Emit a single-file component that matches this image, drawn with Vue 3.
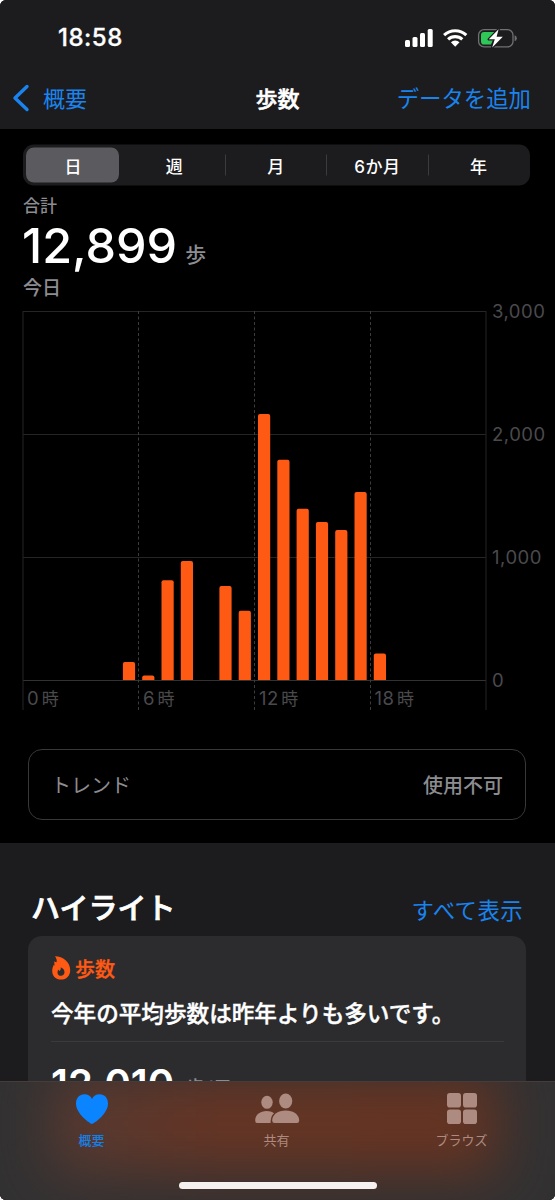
<template>
  <div class="screen">
    <header class="top">
      <div class="status">
        <span class="clock">18:58</span>
        <svg class="status-icons" width="114" height="24" viewBox="0 0 114 24">
          <g fill="#fff">
            <rect x="1" y="14" width="5" height="7" rx="1.5" />
            <rect x="8.5" y="11" width="5" height="10" rx="1.5" />
            <rect x="16" y="7" width="5" height="14" rx="1.5" />
            <rect x="23.7" y="3" width="5" height="18" rx="1.5" />
          </g>
          <g fill="none" stroke="#fff" stroke-width="3.1">
            <path d="M40.1 9.2 A16.2 16.2 0 0 1 62.3 9.2" />
            <path d="M44.1 13.4 A10.4 10.4 0 0 1 58.3 13.4" />
          </g>
          <path d="M46.9 16.3 A6.3 6.3 0 0 1 55.5 16.3 L51.2 20.8 Z" fill="#fff" />
          <rect x="74.6" y="3.6" width="34.4" height="17.3" rx="5.5" fill="none" stroke="#707073" stroke-width="1.3" />
          <path d="M110.6 9.2 q2.2 0.7 2.2 3 t-2.2 3 z" fill="#707073" />
          <path d="M80 6 H91 L86 14 H89 L87 18.6 H80 Q77 18.6 77 15.5 V9 Q77 6 80 6 Z" fill="#30c759" />
          <path d="M94.6 3.3 L84.8 13.3 H90.8 L88.2 21.4 L98.8 10.7 H92.6 Z" fill="#fff" stroke="#1c1c1e" stroke-width="2.6" paint-order="stroke" stroke-linejoin="round" />
        </svg>
      </div>
      <nav class="nav">
        <a class="back">
          <svg width="18" height="28" viewBox="0 0 18 28">
            <path d="M15 2.5 L3 14 L15 25.5" fill="none" stroke="#1a84ee" stroke-width="3.4" stroke-linecap="round" stroke-linejoin="round" />
          </svg>
          <span>概要</span>
        </a>
        <h1>歩数</h1>
        <a class="add">データを追加</a>
      </nav>
    </header>

    <main class="summary">
      <div class="segments">
        <button
          v-for="(item, index) in ranges"
          :key="item"
          class="segment"
          :class="{ 'is-active': index === active, 'has-line': index > active + 1 }"
          @click="active = index"
        >{{ item }}</button>
      </div>

      <div class="caption">合計</div>
      <div class="total"><span class="number">12,899</span><span class="unit">歩</span></div>
      <div class="today">今日</div>

      <svg class="chart" width="555" height="412" viewBox="0 0 555 412">
        <g class="grid">
          <line v-for="y in [11.5, 134.5, 257.5]" :key="y" x1="23" x2="486" :y1="y" :y2="y" />
          <line class="base" x1="23" x2="486" y1="380.5" y2="380.5" />
          <line x1="23" x2="23" y1="11" y2="410" />
          <line x1="486" x2="486" y1="11" y2="410" />
          <line v-for="x in [138.5, 254.5, 370.5]" :key="x" class="dash" :x1="x" :x2="x" y1="11" y2="411" />
        </g>
        <path v-for="bar in bars" :key="bar.hour" class="bar" :d="bar.path" />
        <g class="axis">
          <text v-for="(label, i) in ['3,000', '2,000', '1,000', '0']" :key="label" x="492" :y="18 + i * 123">{{ label }}</text>
          <text v-for="tick in ticks" :key="tick.hour" :x="tick.x" y="405">{{ tick.hour }}<tspan class="ji" dx="2.5">時</tspan></text>
        </g>
      </svg>

      <div class="trend">
        <span>トレンド</span>
        <span class="trend-value">使用不可</span>
      </div>
    </main>

    <section class="highlights">
      <div class="section-head">
        <h2>ハイライト</h2>
        <a>すべて表示</a>
      </div>
      <article class="card">
        <div class="card-title">
          <svg width="20" height="24" viewBox="0 0 20 24">
            <path d="M4 .2 C12 .2 19.2 6 19.2 14 C19.2 20 15.2 23.6 10.2 23.6 C4.9 23.6 1.2 20 1.2 15 C1.2 12.3 1.9 10.2 3 8.4 C3.2 9 3.5 9.4 4 9.7 C3.3 8 3.1 6.6 3.5 5.2 C4.1 5.9 4.8 6.2 5.6 6.3 C6.1 4.2 5.4 2 4 .2 Z" fill="#ff5a14" />
            <path d="M9.7 11.2 C12.2 12.2 13.6 14 13.5 16.3 C13.4 18.5 12 19.8 10 19.8 C7.9 19.8 6.5 18.5 6.5 16.4 C6.5 15.2 6.8 14.3 7.5 13.6 C7.7 14.3 8 14.7 8.6 14.9 C9.6 14 10 12.6 9.7 11.2 Z" fill="#2c2c2e" />
          </svg>
          <span>歩数</span>
        </div>
        <p>今年の平均歩数は昨年よりも多いです。</p>
        <div class="average"><span>12,010</span><small>歩/日</small></div>
      </article>
    </section>

    <footer class="tabbar">
      <div class="tabs">
        <a class="tab is-current">
          <svg width="36" height="32" viewBox="0 0 36 32">
            <path d="M18 31 C16 30.5 2 21 2 10.5 C2 5 5.5 1.2 10.3 1.2 C14 1.2 16.8 3.2 18 6 C19.2 3.2 22 1.2 25.7 1.2 C30.5 1.2 34 5 34 10.5 C34 21 20 30.5 18 31 Z" fill="#0a84ff" />
          </svg>
          <span>概要</span>
        </a>
        <a class="tab">
          <svg width="46" height="32" viewBox="0 0 46 32">
            <g fill="#ad8b80">
              <ellipse cx="13" cy="9.3" rx="5.7" ry="6.5" />
              <path d="M1.2 27.5 C1.2 21.5 6.5 18 12.5 18 C15.5 18 18 18.8 20.1 20.3 C17.8 22.2 16.8 24.5 16.6 30 H3 Q1.2 30 1.2 27.5 Z" />
              <ellipse cx="31.7" cy="8" rx="6.6" ry="7.4" />
              <path d="M18.2 27.5 C18.2 21.5 24 17.5 31.7 17.5 C39.4 17.5 45.2 21.5 45.2 27.5 Q45.2 30 43 30 H20.4 Q18.2 30 18.2 27.5 Z" />
            </g>
          </svg>
          <span>共有</span>
        </a>
        <a class="tab">
          <svg width="32" height="32" viewBox="0 0 32 32">
            <g fill="#ad8b80">
              <rect x="1" y="0" width="14" height="14.5" rx="2.8" />
              <rect x="17" y="0" width="14" height="14.5" rx="2.8" />
              <rect x="1" y="16.5" width="14" height="14.5" rx="2.8" />
              <rect x="17" y="16.5" width="14" height="14.5" rx="2.8" />
            </g>
          </svg>
          <span>ブラウズ</span>
        </a>
      </div>
      <div class="home-indicator"></div>
    </footer>
  </div>
</template>

<script setup>
import { computed, ref } from 'vue'

const ranges = ['日', '週', '月', '6か月', '年']
const active = ref(0)

const steps = {
  5: 146,
  6: 36,
  7: 810,
  8: 968,
  10: 764,
  11: 562,
  12: 2163,
  13: 1790,
  14: 1392,
  15: 1285,
  16: 1220,
  17: 1528,
  18: 215
}

const ticks = [
  { hour: 0, x: 27 },
  { hour: 6, x: 143 },
  { hour: 12, x: 259 },
  { hour: 18, x: 374.5 }
]

// 1歩 = 0.123px、1時間 = 19.3px
const bars = computed(() =>
  Object.entries(steps).map(([hour, value]) => {
    const x = 23 + hour * 19.3 + 3.4
    const top = 380 - value * 0.123
    return {
      hour,
      path: `M${x} 380 V${top + 2} q0 -2 2 -2 h8.2 q2 0 2 2 V380 Z`
    }
  })
)
</script>

<style>
body {
  margin: 0;
  background: #fff;
}
</style>

<style scoped>
.screen {
  position: relative;
  width: 555px;
  height: 1200px;
  overflow: hidden;
  border-radius: 6px;
  background: #000;
  color: #fff;
  font-family: Inter, "Noto Sans CJK JP", sans-serif;
}

.top {
  height: 129px;
  background: #1c1c1e;
}

.status {
  display: flex;
  justify-content: space-between;
  align-items: center;
  height: 74px;
  padding: 0 37px 0 58px;
}

.clock {
  font-size: 24px;
  font-weight: 500;
  letter-spacing: 0.5px;
  -webkit-text-stroke: 0.3px;
}

.status-icons {
  margin-top: 1px;
}

.nav {
  display: grid;
  grid-template-columns: 1fr auto 1fr;
  align-items: center;
  height: 48px;
  padding: 0 24px 0 12px;
  font-size: 22px;
}

.nav span,
.nav h1,
.add {
  margin-top: -2px;
}

.back {
  display: flex;
  align-items: center;
  gap: 13px;
  color: #1a84ee;
}

h1,
h2,
p {
  margin: 0;
}

h1 {
  font-size: 22px;
  font-weight: 500;
  -webkit-text-stroke: 0.5px;
  padding-left: 12px;
}

.add {
  color: #1a84ee;
  font-size: 22.4px;
  text-align: right;
}

.summary {
  height: 714px;
}

.segments {
  display: grid;
  grid-template-columns: repeat(5, 1fr);
  height: 41px;
  margin: 0 25px 0 23px;
  padding: 3px 0;
  box-sizing: border-box;
  border-radius: 11px;
  background: #1c1c1e;
  transform: translateY(15.5px);
}

.segment {
  position: relative;
  margin: 0 1px 0 -1px;
  padding: 0 0 1px 1px;
  border: 0;
  background: none;
  color: #fff;
  font: 500 17px Inter, "Noto Sans CJK JP", sans-serif;
  letter-spacing: 0.6px;
}

.segment.is-active {
  margin: 0 5px 0 3px;
  border-radius: 8px;
  background: #5b5b5f;
}

.segment.has-line::before {
  content: "";
  position: absolute;
  left: 0;
  top: 7px;
  width: 1px;
  height: 21px;
  background: #3b3b3e;
}

.caption {
  margin: 24px 0 0 23px;
  font-size: 17px;
  line-height: 24px;
  font-weight: 500;
  color: #8c8c91;
}

.total {
  display: flex;
  align-items: baseline;
  gap: 8px;
  height: 56px;
  margin-left: 22px;
  line-height: 55px;
}

.number {
  font-size: 48.5px;
  font-weight: 500;
}

.unit {
  font-size: 21px;
  font-weight: 500;
  color: #8c8c91;
  transform: translateY(-1px);
}

.today {
  margin-left: 23px;
  font-size: 19px;
  line-height: 26px;
  font-weight: 500;
  color: #8c8c91;
  padding-top: 2px;
  margin-bottom: -2px;
}

.chart {
  display: block;
}

.grid line {
  stroke: #252527;
  stroke-width: 1;
}

.grid .base {
  stroke: #323234;
}

.grid .dash {
  stroke: #3c3c3e;
  stroke-dasharray: 3 2.5;
}

.bar {
  fill: #ff5a14;
}

.axis {
  fill: #4a4a4d;
  font-size: 18.5px;
  letter-spacing: 0.5px;
}

.ji {
  font-size: 17px;
}

.trend {
  display: flex;
  justify-content: space-between;
  align-items: center;
  box-sizing: border-box;
  width: 498px;
  height: 71px;
  margin: 37px 0 0 28px;
  padding: 0 22px;
  border: 1.5px solid #38383a;
  border-radius: 14px;
  font-size: 20px;
  color: #8c8c91;
}

.trend-value {
  font-weight: 500;
}

.highlights {
  height: 357px;
  background: #1c1c1e;
}

.section-head {
  display: flex;
  justify-content: space-between;
  align-items: baseline;
  height: 93px;
  padding: 0 32px 0 31px;
  line-height: 131px;
  box-sizing: border-box;
}

h2 {
  font-size: 29px;
  font-weight: 500;
  -webkit-text-stroke: 0.8px;
}

.section-head a {
  color: #1a84ee;
  font-size: 22.4px;
  letter-spacing: 0.4px;
}

.card {
  height: 264px;
  margin: 0 29px 0 28px;
  padding: 19px 22px 0 23px;
  box-sizing: border-box;
  border-radius: 14px;
  background: #2c2c2e;
}

.card-title {
  display: flex;
  align-items: center;
  gap: 4px;
  height: 26px;
  color: #ff5a14;
  font-size: 20px;
  font-weight: 500;
  -webkit-text-stroke: 0.3px;
}

.card-title span {
  margin-top: 1px;
}

.card p {
  height: 60px;
  border-bottom: 1px solid #3a3a3c;
  font-size: 22.6px;
  line-height: 66px;
  font-weight: 500;
  white-space: nowrap;
  -webkit-text-stroke: 0.4px;
}

.average {
  display: flex;
  align-items: baseline;
  gap: 11px;
  padding-top: 17px;
}

.average span {
  font-size: 40px;
  font-weight: 600;
}

.average small {
  font-size: 20px;
  font-weight: 500;
  color: #8c8c91;
  transform: translateY(-2px);
}

.tabbar {
  position: absolute;
  left: 0;
  right: 0;
  bottom: 0;
  height: 119px;
  box-sizing: border-box;
  overflow: hidden;
  border-top: 1px solid #463c39;
  background: #323132;
}

.tabbar::before {
  content: "";
  position: absolute;
  left: 50px;
  right: 58px;
  top: -8px;
  height: 100px;
  background: linear-gradient(90deg, #553a32, #653525 35%, #663422);
  filter: blur(27px);
}

.tabs {
  position: relative;
  display: grid;
  grid-template-columns: repeat(3, 1fr);
  height: 103px;
  margin: 0 1px 0 -1px;
}

.tab {
  display: flex;
  flex-direction: column;
  align-items: center;
  padding-top: 11px;
  color: #ad8b80;
  font-size: 13px;
  line-height: 20px;
}

.tab span {
  margin-top: 5px;
}

.tab.is-current {
  color: #167fe5;
  font-weight: 500;
}

.home-indicator {
  position: relative;
  width: 198px;
  height: 7px;
  margin: -3px auto 0;
  border-radius: 4px;
  background: #f4f1f0;
}
</style>
